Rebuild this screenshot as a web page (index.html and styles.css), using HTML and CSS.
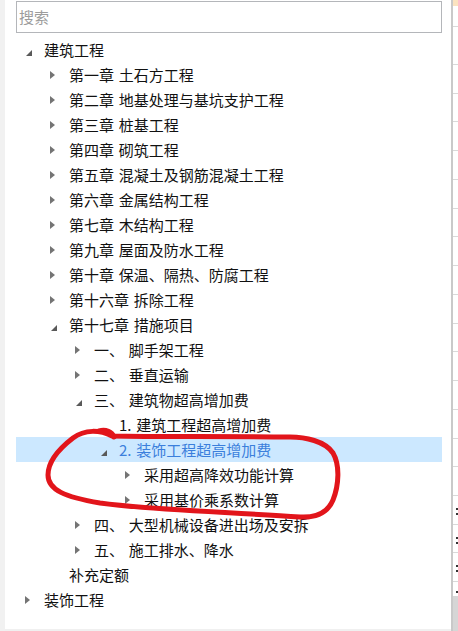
FILE: index.html
```html
<!DOCTYPE html>
<html lang="zh-CN">
<head>
<meta charset="utf-8">
<title>定额树</title>
<link rel="stylesheet" href="styles.css">
</head>
<body>
<div class="app">
  <div class="left-strip"></div>
  <div class="panel">
    <div class="search">搜索</div>
    <div class="tree">
      <div class="row l0"><span class="tg open"></span><span class="tx">建筑工程</span></div>
      <div class="row l1"><span class="tg"></span><span class="tx">第一章 土石方工程</span></div>
      <div class="row l1"><span class="tg"></span><span class="tx">第二章 地基处理与基坑支护工程</span></div>
      <div class="row l1"><span class="tg"></span><span class="tx">第三章 桩基工程</span></div>
      <div class="row l1"><span class="tg"></span><span class="tx">第四章 砌筑工程</span></div>
      <div class="row l1"><span class="tg"></span><span class="tx">第五章 混凝土及钢筋混凝土工程</span></div>
      <div class="row l1"><span class="tg"></span><span class="tx">第六章 金属结构工程</span></div>
      <div class="row l1"><span class="tg"></span><span class="tx">第七章 木结构工程</span></div>
      <div class="row l1"><span class="tg"></span><span class="tx">第九章 屋面及防水工程</span></div>
      <div class="row l1"><span class="tg"></span><span class="tx">第十章 保温、隔热、防腐工程</span></div>
      <div class="row l1"><span class="tg"></span><span class="tx">第十六章 拆除工程</span></div>
      <div class="row l1"><span class="tg open"></span><span class="tx">第十七章 措施项目</span></div>
      <div class="row l2"><span class="tg"></span><span class="tx">一、 脚手架工程</span></div>
      <div class="row l2"><span class="tg"></span><span class="tx">二、 垂直运输</span></div>
      <div class="row l2"><span class="tg open"></span><span class="tx">三、 建筑物超高增加费</span></div>
      <div class="row l3"><span class="tg none"></span><span class="tx">1. 建筑工程超高增加费</span></div>
      <div class="row l3 sel"><span class="tg open"></span><span class="tx">2. 装饰工程超高增加费</span></div>
      <div class="row l4"><span class="tg"></span><span class="tx">采用超高降效功能计算</span></div>
      <div class="row l4"><span class="tg"></span><span class="tx">采用基价乘系数计算</span></div>
      <div class="row l2"><span class="tg"></span><span class="tx">四、 大型机械设备进出场及安拆</span></div>
      <div class="row l2"><span class="tg"></span><span class="tx">五、 施工排水、降水</span></div>
      <div class="row l1"><span class="tg none"></span><span class="tx">补充定额</span></div>
      <div class="row l0"><span class="tg"></span><span class="tx">装饰工程</span></div>
    </div>
  </div>
  <div class="sep"></div>
  <div class="grid">
    <div class="cell head"></div>
    <div class="cell tall"></div>
    <div class="cell"></div><div class="cell"></div><div class="cell"></div><div class="cell"></div>
    <div class="cell"></div><div class="cell"></div><div class="cell"></div><div class="cell"></div>
    <div class="cell"></div><div class="cell"></div><div class="cell"></div><div class="cell"></div>
    <div class="cell"></div><div class="cell"></div><div class="cell"></div>
    <div class="cell mark"></div><div class="cell mark"></div><div class="cell mark"></div>
    <div class="cell mark last"></div>
    <div class="corner"></div>
  </div>
</div>
<svg class="annot" width="458" height="631" viewBox="0 0 458 631">
  <path d="M 112 436 C 100 430, 85 429, 73 438 C 60 448, 48 460, 48 475 C 48 490, 65 497, 100 503 C 150 510, 230 512, 300 517 C 318 518, 328 512, 333 500 C 339 485, 340 465, 333 453 C 325 441, 305 437, 290 437 C 230 436, 160 437, 112 436" />
  <path d="M 99 431 C 106 429, 112 432, 114 437" />
</svg>
</body>
</html>
```

FILE: styles.css
```css
html, body {
  margin: 0;
  padding: 0;
}

body {
  width: 458px;
  height: 631px;
  overflow: hidden;
  position: relative;
  background: #f0f0f0;
  font-family: "Noto Sans CJK SC", "Microsoft YaHei", sans-serif;
  font-size: 15px;
  color: #111111;
}

.app {
  display: flex;
  height: 631px;
}

.left-strip {
  width: 5px;
  flex: none;
  background: #f1f1f1;
}

.panel {
  width: 446px;
  height: 629px;
  flex: none;
  background: #ffffff;
  box-sizing: border-box;
  padding: 1px 0 0 11px;
}

.search {
  width: 426px;
  height: 32px;
  box-sizing: border-box;
  border: 1px solid #b4b6ba;
  padding-left: 2px;
  line-height: 30px;
  color: #9c9c9c;
}

.tree {
  width: 426px;
  margin-top: 4px;
  word-spacing: 1.5px;
}

.row {
  display: flex;
  align-items: center;
  height: 25px;
}

.l1 { padding-left: 25px; }
.l2 { padding-left: 50px; }
.l3 { padding-left: 75px; }
.l4 { padding-left: 100px; }

.row.sel {
  background: #cce8ff;
}

.row.sel .tx {
  color: #3b7fdc;
}

.tg {
  position: relative;
  width: 28px;
  height: 25px;
  flex: none;
}

.tg::before {
  content: "";
  position: absolute;
  left: 9px;
  top: 9px;
  width: 0;
  height: 0;
  border-left: 5px solid #747474;
  border-top: 4px solid transparent;
  border-bottom: 4px solid transparent;
}

.tg.open::before {
  left: 10px;
  top: 13px;
  border-top: 0;
  border-left: 6px solid transparent;
  border-bottom: 6px solid #595959;
}

.tg.none::before {
  display: none;
}

.tx {
  white-space: pre;
  line-height: 25px;
}

.sep {
  width: 2px;
  flex: none;
  background: #c9c9c9;
}

.grid {
  flex: 1;
  display: flex;
  flex-direction: column;
  background: #ffffff;
}

.cell {
  position: relative;
  height: 28.74px;
  flex: none;
  box-sizing: border-box;
  border-bottom: 1px solid #d9d9d9;
}

.cell.head {
  height: 27px;
  background: linear-gradient(#fbe3c0 0, #fbe3c0 6px, #ffffff 6px);
}

.cell.tall {
  height: 38px;
}

.cell.mark::before {
  content: "";
  position: absolute;
  left: 3px;
  top: 12px;
  width: 2px;
  height: 2px;
  background: #333333;
  box-shadow: 0 5px 0 #333333;
}

.cell.last {
  height: 14px;
  border-bottom: 0;
}

.cell.last::before {
  top: 9px;
  box-shadow: none;
}

.corner {
  flex: 1;
  background: #d6d6d6;
}

.annot {
  position: absolute;
  left: 0;
  top: 0;
  pointer-events: none;
  fill: none;
  stroke: #e2151b;
  stroke-width: 5;
  stroke-linecap: round;
  stroke-linejoin: round;
}
```
